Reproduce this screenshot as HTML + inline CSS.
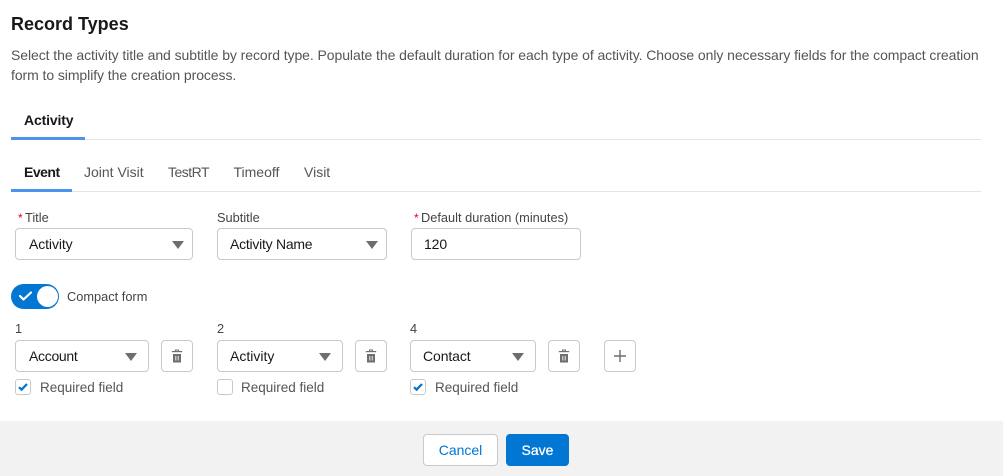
<!DOCTYPE html>
<html lang="en"><head><meta charset="utf-8"><title>Record Types</title>
<style>
html,body{margin:0;padding:0;background:#fff}
#p{position:relative;width:1003px;height:476px;overflow:hidden;background:#fff;font-family:"Liberation Sans",sans-serif;color:#181818;font-size:14px}
#p div{position:absolute;white-space:nowrap}
.t{line-height:18px}
.g{color:#555}
.l{font-size:12.8px;color:#444}
.box{box-sizing:border-box;border:1px solid #c9c9c9;border-radius:4px;background:#fff;height:32px}
.v{line-height:18px;font-size:14px;letter-spacing:-.1px;color:#181818}
.arrow{width:0;height:0;border-left:6.5px solid transparent;border-right:6.5px solid transparent;border-top:8px solid #706e6b}
.r{color:#ea001e}
.cb{box-sizing:border-box;width:16px;height:16px;border:1px solid #c9c9c9;border-radius:3px;background:#fff}
.q{font-size:13.5px;letter-spacing:0}
svg{position:absolute;display:block}
</style></head><body><div id="p">
<div class="t" style="left:11px;top:13px;font-size:18px;font-weight:700;line-height:22px;color:#181818">Record Types</div>
<div class="t g" style="left:11px;top:46px;font-size:14px;letter-spacing:-.072px">Select the activity title and subtitle by record type. Populate the default duration for each type of activity. Choose only necessary fields for the compact creation</div>
<div class="t g" style="left:11px;top:66px;font-size:14px;letter-spacing:-.072px">form to simplify the creation process.</div>

<div style="left:11px;top:139px;width:970px;height:1px;background:#e5e5e5"></div>
<div style="left:11px;top:137px;width:74px;height:3px;background:#4a94ec"></div>
<div class="t" style="left:24px;top:111px;font-weight:700;font-size:14px;letter-spacing:-.15px">Activity</div>

<div style="left:11px;top:191px;width:970px;height:1px;background:#e5e5e5"></div>
<div style="left:11px;top:189px;width:61px;height:3px;background:#4a94ec"></div>
<div class="t" style="left:24px;top:163px;font-weight:700;font-size:14px;letter-spacing:-.5px">Event</div>
<div class="t g" style="left:84px;top:163px;font-size:14px">Joint Visit</div>
<div class="t g" style="left:168px;top:163px;font-size:14px;letter-spacing:-.5px">TestRT</div>
<div class="t g" style="left:233.5px;top:163px;font-size:14px">Timeoff</div>
<div class="t g" style="left:304px;top:163px;font-size:14px">Visit</div>

<div class="t r" style="left:18px;top:209px;font-size:12px">*</div>
<div class="t l" style="left:25px;top:209px">Title</div>
<div class="box" style="left:15px;top:228px;width:178px"></div>
<div class="v" style="left:29px;top:235px">Activity</div>
<div class="arrow" style="left:172px;top:241px"></div>

<div class="t l" style="left:217px;top:209px">Subtitle</div>
<div class="box" style="left:217px;top:228px;width:170px"></div>
<div class="v" style="left:230px;top:235px;letter-spacing:-.25px">Activity Name</div>
<div class="arrow" style="left:366px;top:241px"></div>

<div class="t r" style="left:414px;top:209px;font-size:12px">*</div>
<div class="t l" style="left:421px;top:209px">Default duration (minutes)</div>
<div class="box" style="left:411px;top:228px;width:170px"></div>
<div class="v" style="left:424px;top:235px">120</div>

<div style="left:11px;top:284px;width:48px;height:25px;border-radius:13px;background:#0176d3"></div>
<div style="left:37px;top:286px;width:21px;height:21px;border-radius:50%;background:#fff"></div>
<svg style="left:18px;top:290px" width="15" height="12" viewBox="0 0 15 12"><path d="M2 6 L5.5 9.5 L13 2.5" fill="none" stroke="#fff" stroke-width="2.2" stroke-linecap="round" stroke-linejoin="round"/></svg>
<div class="t l" style="left:67px;top:288px">Compact form</div>

<div class="t l" style="left:15px;top:320px">1</div>
<div class="box" style="left:15px;top:340px;width:134px"></div>
<div class="v" style="left:29px;top:347px;letter-spacing:-.3px">Account</div>
<div class="arrow" style="left:125px;top:353px"></div>
<div class="box" style="left:161px;top:340px;width:32px"></div>
<svg style="left:171px;top:349px" width="12" height="14" viewBox="0 0 12 14"><path d="M4.5 2.2V1h3v1.2" fill="none" stroke="#706e6b" stroke-width="1"/><path d="M.8 2.6h10.4" stroke="#706e6b" stroke-width="1.2"/><path d="M2 5h8v8.5H2z" fill="#706e6b"/><path d="M4.8 7v4.5M7.2 7v4.5" stroke="#e8e8e8" stroke-width="1"/></svg>
<div class="cb" style="left:15px;top:379px"></div>
<svg style="left:17px;top:382px" width="12" height="10" viewBox="0 0 12 10"><path d="M2 5.2 L4.6 7.6 L10 2" fill="none" stroke="#0176d3" stroke-width="2.3"/></svg>
<div class="t g q" style="left:40px;top:379px">Required field</div>

<div class="t l" style="left:217px;top:320px">2</div>
<div class="box" style="left:217px;top:340px;width:126px"></div>
<div class="v" style="left:230px;top:347px;letter-spacing:0">Activity</div>
<div class="arrow" style="left:319px;top:353px"></div>
<div class="box" style="left:355px;top:340px;width:32px"></div>
<svg style="left:365px;top:349px" width="12" height="14" viewBox="0 0 12 14"><path d="M4.5 2.2V1h3v1.2" fill="none" stroke="#706e6b" stroke-width="1"/><path d="M.8 2.6h10.4" stroke="#706e6b" stroke-width="1.2"/><path d="M2 5h8v8.5H2z" fill="#706e6b"/><path d="M4.8 7v4.5M7.2 7v4.5" stroke="#e8e8e8" stroke-width="1"/></svg>
<div class="cb" style="left:217px;top:379px"></div>
<div class="t g q" style="left:241px;top:379px">Required field</div>

<div class="t l" style="left:410px;top:320px">4</div>
<div class="box" style="left:410px;top:340px;width:126px"></div>
<div class="v" style="left:423px;top:347px;letter-spacing:-.1px">Contact</div>
<div class="arrow" style="left:512px;top:353px"></div>
<div class="box" style="left:548px;top:340px;width:32px"></div>
<svg style="left:558px;top:349px" width="12" height="14" viewBox="0 0 12 14"><path d="M4.5 2.2V1h3v1.2" fill="none" stroke="#706e6b" stroke-width="1"/><path d="M.8 2.6h10.4" stroke="#706e6b" stroke-width="1.2"/><path d="M2 5h8v8.5H2z" fill="#706e6b"/><path d="M4.8 7v4.5M7.2 7v4.5" stroke="#e8e8e8" stroke-width="1"/></svg>
<div class="box" style="left:604px;top:340px;width:32px"></div>
<svg style="left:613px;top:349px" width="14" height="14" viewBox="0 0 14 14"><path d="M7 1v12M1 7h12" stroke="#706e6b" stroke-width="1.4"/></svg>
<div class="cb" style="left:410px;top:379px"></div>
<svg style="left:412px;top:382px" width="12" height="10" viewBox="0 0 12 10"><path d="M2 5.2 L4.6 7.6 L10 2" fill="none" stroke="#0176d3" stroke-width="2.3"/></svg>
<div class="t g q" style="left:435px;top:379px">Required field</div>

<div style="left:0;top:421px;width:1003px;height:55px;background:#f2f2f2"></div>
<div class="box" style="left:423px;top:434px;width:75px;height:32px;text-align:center;line-height:30px;color:#0176d3;font-size:14px">Cancel</div>
<div style="left:506px;top:434px;width:63px;height:32px;border-radius:4px;background:#0176d3;text-align:center;line-height:32px;color:#fff;font-size:14px;-webkit-text-stroke:.25px #fff">Save</div>
</div></body></html>
